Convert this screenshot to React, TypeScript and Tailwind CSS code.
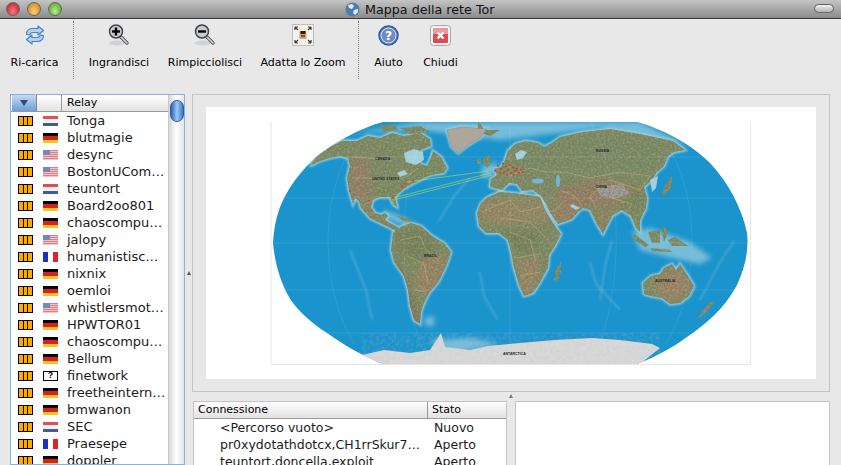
const relays: [string, string][] = [
  ["Tonga", "nl"],
  ["blutmagie", "de"],
  ["desync", "us"],
  ["BostonUCom…", "us"],
  ["teuntort", "nl"],
  ["Board2oo801", "de"],
  ["chaoscompu…", "de"],
  ["jalopy", "us"],
  ["humanistisc…", "fr"],
  ["nixnix", "de"],
  ["oemloi", "de"],
  ["whistlersmot…", "us"],
  ["HPWTOR01", "de"],
  ["chaoscompu…", "de"],
  ["Bellum", "de"],
  ["finetwork", "??"],
  ["freetheintern…", "de"],
  ["bmwanon", "de"],
  ["SEC", "nl"],
  ["Praesepe", "fr"],
  ["doppler", "de"],
];

const circuits: [string, string][] = [
  ["<Percorso vuoto>", "Nuovo"],
  ["pr0xydotathdotcx,CH1rrSkur7…", "Aperto"],
  ["teuntort,doncella,exploit", "Aperto"],
];

const Flag = ({ code }: { code: string }) => {
  if (code === "de")
    return (
      <div className="flex flex-col w-[15px] h-[10px]">
        <div className="h-[3px] bg-black" />
        <div className="h-[4px] bg-[#d8201c]" />
        <div className="h-[3px] bg-[#f6c21c]" />
      </div>
    );
  if (code === "nl")
    return (
      <div className="flex flex-col w-[15px] h-[10px]">
        <div className="h-[3px] bg-[#d9525a]" />
        <div className="h-[4px] bg-[#f4f0f0]" />
        <div className="h-[3px] bg-[#3f5a9e]" />
      </div>
    );
  if (code === "fr")
    return (
      <div className="flex w-[15px] h-[10px]">
        <div className="w-[5px] bg-[#1c2fc8]" />
        <div className="w-[5px] bg-white" />
        <div className="w-[5px] bg-[#e0222a]" />
      </div>
    );
  if (code === "us")
    return (
      <div className="relative w-[15px] h-[10px] bg-[repeating-linear-gradient(180deg,#d9808a_0,#d9808a_1px,#eec4c6_1px,#eec4c6_2px)]">
        <div className="absolute left-0 top-0 w-[7px] h-[5px] bg-[#7488bc]" />
      </div>
    );
  return (
    <div className="w-[15px] h-[10px] border border-black bg-white flex items-center justify-center text-[9px] leading-none font-bold text-black font-['Liberation_Sans',sans-serif]">
      ?
    </div>
  );
};

const Bandwidth = () => (
  <div className="flex gap-px w-[15px] h-[10px] bg-black p-px">
    <div className="flex-1 bg-[#ffa800]" />
    <div className="flex-1 bg-[#ffa800]" />
    <div className="flex-1 bg-[#ffa800]" />
  </div>
);

const Tool = ({ label, width, children }: { label: string; width: string; children: React.ReactNode }) => (
  <div className={`flex flex-col items-center shrink-0 ${width}`}>
    <div className="h-[28px] flex items-center justify-center">{children}</div>
    <span className="mt-[7px] text-[11px] leading-[14px] text-black whitespace-nowrap">{label}</span>
  </div>
);

const Reload = () => (
  <svg width="20" height="20" viewBox="0 0 20 20" fill="none">
    <path d="M1.500 9.500C1.500 5 4 3.500 8 3.500h5V.8l5.500 4.700L13 10V7.500H8C6 7.500 5 8.500 4.800 10z" fill="#b4d2ee" stroke="#3f82c4" strokeWidth="1.100" strokeLinejoin="round" />
    <path d="M18.500 10.500c0 4.500-2.500 6-6.500 6H7v2.700L1.500 14.500 7 10v2.500h5c2 0 3-1 3.200-2.500z" fill="#b4d2ee" stroke="#3f82c4" strokeWidth="1.100" strokeLinejoin="round" />
  </svg>
);

const Magnifier = ({ plus }: { plus?: boolean }) => (
  <svg width="22" height="24" viewBox="0 0 22 24" fill="none">
    <ellipse cx="9" cy="20" rx="8" ry="2.500" fill="#d2d2d2" />
    <path d="M13 14l6 6" stroke="#555" strokeWidth="3.400" strokeLinecap="round" />
    <path d="M13 14l6 6" stroke="#d8d8d8" strokeWidth="1.600" strokeLinecap="round" />
    <circle cx="8" cy="8.500" r="6.500" fill="#c5ccd4" stroke="#444" strokeWidth="1.500" />
    <path d="M4 8.500h8" stroke="#000" strokeWidth="2.400" />
    {plus && <path d="M8 4.500v8" stroke="#000" strokeWidth="2.400" />}
  </svg>
);

const FitZoom = () => (
  <svg width="22" height="22" viewBox="0 0 22 22" fill="none">
    <rect x="0.500" y="0.500" width="21" height="21" fill="#f6f3ec" stroke="#bdbdbd" />
    <rect x="7.500" y="7" width="7" height="8" fill="#c9a583" />
    <rect x="8.500" y="7" width="5" height="3" fill="#2b1c14" />
    <rect x="9" y="11" width="4" height="2" fill="#a83c2c" />
    <path d="M3 3l3 3M3 3h3M3 3v3M19 3l-3 3M19 3h-3M19 3v3M3 19l3-3M3 19h3M3 19v-3M19 19l-3-3M19 19h-3M19 19v-3" stroke="#3c3c3c" strokeWidth="1.200" />
  </svg>
);

const Help = () => (
  <svg width="21" height="21" viewBox="0 0 22 22">
    <circle cx="11" cy="11" r="10" fill="#5a83c4" stroke="#2b5aa4" strokeWidth="1.500" />
    <circle cx="11" cy="11" r="7.800" fill="#6f8cc0" stroke="#dfe8f6" strokeWidth="1" />
    <text x="11" y="15.500" textAnchor="middle" fontSize="13" fontWeight="700" fill="#fff" fontFamily="DejaVu Sans, sans-serif">?</text>
  </svg>
);

const CloseIcon = () => (
  <svg width="21" height="21" viewBox="0 0 21 21">
    <rect x="0.500" y="0.500" width="20" height="20" rx="3" fill="#f2f2f2" stroke="#a9a9a9" />
    <rect x="3" y="3" width="15" height="15" rx="1" fill="#dc4a52" />
    <rect x="3" y="3" width="15" height="6" fill="#eb9a9c" />
    <path d="M7.500 7.500l6 6M13.500 7.500l-6 6" stroke="#fff" strokeWidth="2.400" />
  </svg>
);

const Separator = () => <div className="w-0 h-[58px] border-l border-dotted border-[#777] shrink-0" />;

const earth =
  "M383 122H637C660 128 690 143 710 163C728 182 742 208 747 233C749 250 745 268 737 285C725 308 705 325 687 337C672 348 655 357 637 364H383C365 357 345 346 327 333C310 322 300 312 293 303C282 288 275 265 273 243C274 225 278 210 284 198C292 183 302 170 316 157C335 142 360 128 383 122Z";

const northAmerica =
  "M310 166L318 155 330 147 342 141 357 141 368 136 380 138 392 133 404 136 420 133 430 139 431 146 421 150 414 156 421 164 427 166 431 158 433 151 441 157 447 168 444 173 436 174 428 176 420 180 412 184 405 188 400 192 395 197 397 207 393 204 390 197 380 197 373 200 371 207 375 213 381 215 385 213 388 216 385 220 392 224 399 228 396 231 388 227 380 223 370 218 361 208 359 201 355 198 353 204 349 190 347 178 350 166 348 158 340 156 330 158 320 161Z";
const southAmerica =
  "M393 233L402 226 411 223 421 226 432 236 444 243 451 252 447 264 439 281 429 293 424 303 421 312 420 324 414 320 410 306 408 290 404 276 394 262 391 250Z";
const africa =
  "M477 213L481 203 488 197 500 192 513 193 528 195 540 197 545 210 553 223 561 234 555 246 549 255 548 268 539 284 533 293 524 296 519 285 514 268 511 252 508 240 499 233 486 233 479 226Z";
const eurasia =
  "M490 187L491 179 497 175 494 169 501 167 505 160 508 151 515 144 526 141 538 143 544 147 552 143 560 137 583 132 610 129 640 134 673 141 685 150 674 152 668 156 664 166 657 172 652 180 644 187 647 198 646 208 640 220 640 232 636 228 631 216 622 210 612 216 603 234 597 224 590 210 583 208 578 212 572 219 558 224 551 214 546 204 541 196 533 190 522 191 517 184 509 183 502 190Z";
const australia = "M643 283L651 276 660 274 664 268 672 264 676 270 680 264 688 276 694 286 689 296 680 303 670 304 662 298 650 296 644 294Z";
const greenland = "M447 130L462 127 487 129 480 138 470 144 458 153 451 146Z";
const antarctica =
  "M362 355L384 350 410 353 430 350 441 333 445 347 470 350 488 346 520 343 555 340 592 338 620 340 652 344 660 348 640 364 380 366Z";
const islands = [
  "M556 270L561 262 561 272 557 281 554 280Z",
  "M483 160L489 154 491 163 487 168Z",
  "M477 160L481 158 481 164 477 164Z",
  "M662 193L667 182 672 176 671 187 664 196Z",
  "M634 234L649 245 645 247 632 238Z",
  "M648 232L660 230 660 243 652 243Z",
  "M664 226L668 232 664 242 662 232Z",
  "M650 248L670 250 672 252 652 251Z",
  "M668 240L675 237 688 246 672 246Z",
  "M714 303L706 313 696 320 702 312 710 302Z",
  "M396 216L408 218 414 222 404 221Z",
  "M478 120L484 130 500 130 490 136 478 132Z",
  "M400 128L420 126 430 132 410 134Z",
  "M380 126L394 124 398 130 384 132Z",
];

const WorldMap = () => (
  <svg viewBox="206 107 610 272" className="w-full h-full block">
    <defs>
      <clipPath id="earth">
        <path d={earth} />
      </clipPath>
      <clipPath id="land">
        <path d={northAmerica} />
        <path d={southAmerica} />
        <path d={africa} />
        <path d={eurasia} />
        <path d={australia} />
        {islands.map((d) => (
          <path key={d} d={d} />
        ))}
      </clipPath>
      <filter id="soft">
        <feGaussianBlur stdDeviation="0.350" />
      </filter>
      <filter id="shelf">
        <feGaussianBlur stdDeviation="1.100" />
      </filter>
      <filter id="broad" x="-20%" y="-20%" width="140%" height="140%">
        <feGaussianBlur stdDeviation="2.800" />
      </filter>
      <filter id="wide" x="-20%" y="-20%" width="140%" height="140%">
        <feGaussianBlur stdDeviation="3" />
      </filter>
      <filter id="relief" x="0" y="0" width="100%" height="100%">
        <feTurbulence type="fractalNoise" baseFrequency="0.550" numOctaves="2" seed="4" />
        <feColorMatrix values="0 0 0 0 0.220 0 0 0 0 0.170 0 0 0 0 0.110 0 0 0 1.500 -0.520" />
      </filter>
      <filter id="reliefLight" x="0" y="0" width="100%" height="100%">
        <feTurbulence type="fractalNoise" baseFrequency="0.480" numOctaves="2" seed="11" />
        <feColorMatrix values="0 0 0 0 0.820 0 0 0 0 0.770 0 0 0 0 0.640 0 0 0 1.300 -0.500" />
      </filter>
      <filter id="snow" x="0" y="0" width="100%" height="100%">
        <feTurbulence type="fractalNoise" baseFrequency="0.300" numOctaves="2" seed="7" />
        <feColorMatrix values="0 0 0 0 0.500 0 0 0 0 0.500 0 0 0 0 0.500 0 0 0 1.500 -0.550" />
      </filter>
    </defs>
    <path d="M271 122V364.500H750.500V122" fill="none" stroke="#e6e6e6" />
    <g clipPath="url(#earth)">
      <rect x="270" y="120" width="482" height="246" fill="#1b93cc" />
      {/* ocean ridges and broad shelves */}
      <g filter="url(#shelf)" fill="none" stroke="#7fc3e0" strokeOpacity="0.600" strokeWidth="1.300">
        <path d="M470 178L455 195 438 222" />
        <path d="M480 272L484 296 498 320" />
        <path d="M350 250L366 290 372 320" />
        <path d="M590 262L596 284 620 310" />
        <path d="M612 240L606 262 600 300" />
        <path d="M700 300L720 262 735 240" />
      </g>
      <g filter="url(#broad)" fill="#86c4dc" fillOpacity="0.850">
        <path d="M632 232L650 228 690 242 712 258 700 264 664 256 640 250Z" />
        <path d="M350 134L420 122 640 122 690 146 600 128 500 140 420 130Z" />
        <path d="M430 340L470 338 500 344 445 356Z" />
        <path d="M384 210L400 216 412 222 404 225 386 218Z" />
        <path d="M482 166L498 162 492 176 482 178Z" />
        <path d="M424 318L434 316 434 326 426 326Z" />
      </g>
      <g filter="url(#shelf)" fill="#a2d0de" stroke="#a2d0de" strokeWidth="2.800">
        <path d={northAmerica} />
        <path d={southAmerica} />
        <path d={africa} />
        <path d={eurasia} />
        <path d={australia} />
        <path d={greenland} />
      </g>
      <g filter="url(#soft)">
        <path d={antarctica} fill="#d8d8d8" />
        <g clipPath="url(#land)">
          <rect x="270" y="120" width="482" height="246" fill="#758a5e" />
          <g filter="url(#wide)">
            <path d="M352 160L368 158 372 196 360 206 350 190Z" fill="#8f7e62" />
            <path d="M360 205L385 225 370 222Z" fill="#8f7e62" />
            <path d="M404 170L430 160 440 172 404 186Z" fill="#6e8a5a" />
            <path d="M386 180L404 186 394 198 376 196Z" fill="#6f8a58" />
            <path d="M394 228L430 232 440 250 415 262 398 250Z" fill="#6d8052" />
            <path d="M424 258L448 256 436 286 424 298 414 282Z" fill="#94825e" />
            <path d="M396 250L410 290 420 324 412 320 400 280Z" fill="#7d6a50" />
            <path d="M480 198L545 200 552 222 500 226 480 220Z" fill="#90865f" />
            <path d="M500 230L540 232 532 256 516 250Z" fill="#6d7e50" />
            <path d="M516 258L540 262 534 292 524 294Z" fill="#958560" />
            <path d="M505 160L530 145 600 140 668 146 650 170 590 168 540 172Z" fill="#6f8a60" />
            <path d="M555 190L600 178 640 186 634 208 596 206 560 214Z" fill="#8e7a5c" />
            <path d="M551 206L582 206 572 220 558 224Z" fill="#94805e" />
            <path d="M596 210L612 214 602 234Z" fill="#8e7f58" />
            <path d="M622 192L646 190 644 206 624 214Z" fill="#6e8458" />
            <path d="M650 278L678 268 692 286 676 302 660 296Z" fill="#98825e" />
          </g>
          <path d="M596 188L622 184 630 194 614 199 600 196Z" fill="#9c9a98" filter="url(#soft)" />
          <rect x="270" y="120" width="482" height="246" filter="url(#relief)" />
          <rect x="270" y="120" width="482" height="246" filter="url(#reliefLight)" opacity="0.400" />
        </g>
        <path d={greenland} fill="#aea69a" stroke="#8d8376" strokeWidth="0.500" />
        <path d={antarctica} filter="url(#snow)" opacity="0.300" />
        {/* inland water */}
        <path d="M404 153L414 149 423 152 424 160 416 165 406 162Z" fill="#a2d0de" />
        <path d="M397 173L404 170 408 174 400 177Z" fill="#a2d0de" />
        <path d="M515 154L521 150 527 152 523 158 517 160Z" fill="#a2d0de" />
        <ellipse cx="538" cy="181" rx="6" ry="2.500" fill="#6fb8d8" />
        <ellipse cx="558" cy="181" rx="2" ry="6" fill="#6fb8d8" />
        <path d="M572 204L580 208 576 210 570 206Z" fill="#a2d0de" />
        <path d="M650 180L658 176 656 188 652 192Z" fill="#a2d0de" />
      </g>
      {/* national borders */}
      <g fill="none" stroke="#cdb878" strokeOpacity="0.800" strokeWidth="0.600" clipPath="url(#land)">
        <path d="M352 157L392 160M352 178L405 178 418 168M361 206L380 197" />
        <path d="M400 240L420 236 426 250 440 262M408 256L424 264 428 284M414 290L426 292" />
        <path d="M482 212L510 200 520 212 545 206M500 218L530 222 548 240M510 232L530 240 536 262M515 258L540 254M520 276L540 272" />
        <path d="M510 176L530 168 545 172 565 172 590 178 620 172 650 176 640 190 610 180 590 196 596 208M560 190L575 196 582 206M566 200L552 212M612 198L632 204 624 214" />
      </g>
      <g fill="none" stroke="#ffffff" strokeOpacity="0.160" strokeWidth="0.600">
        <path d="M273 243H750M284 198H740M284 290H740M316 157H712M327 333H690" />
        <path d="M510 122V364M430 122C395 180 395 300 430 364M590 122C625 180 625 300 590 364M350 150C320 200 320 290 355 345M670 150C700 200 700 290 665 345" />
      </g>
      <g fontFamily="Liberation Sans, sans-serif" fontSize="3.500" fill="#1c2a2a" fontWeight="700">
        <text x="375" y="160">CANADA</text>
        <text x="372" y="180">UNITED STATES</text>
        <text x="596" y="152">RUSSIA</text>
        <text x="424" y="257">BRAZIL</text>
        <text x="655" y="282">AUSTRALIA</text>
        <text x="503" y="355">ANTARCTICA</text>
        <text x="596" y="188">CHINA</text>
      </g>
      {/* Tor circuit lines */}
      <g fill="none" stroke="#a8d86a" strokeOpacity="0.900" strokeWidth="0.700">
        <path d="M407 182L488 171" />
        <path d="M393 198L491 173" />
        <path d="M394 200L492 175" />
        <path d="M393 198V204" />
      </g>
      <g fill="#e8322a">
        {[
          [494, 170], [497, 165], [500, 168], [503, 172], [505, 166], [507, 169], [509, 164], [510, 172], [512, 167],
          [514, 170], [516, 168], [518, 172], [520, 169], [506, 174], [499, 172], [502, 163], [513, 174], [522, 171],
          [349, 190], [392, 197], [401, 186], [412, 180], [368, 200], [404, 183],
        ].map(([x, y]) => (
          <rect key={`${x}-${y}`} x={x} y={y} width="2" height="1.500" />
        ))}
      </g>
    </g>
  </svg>
);

export default function App() {
  return (
    <div className="w-[841px] h-[465px] overflow-hidden bg-[#e8e8e8] font-['DejaVu_Sans',sans-serif] text-black">
      <div className="relative h-[19px] flex items-center bg-linear-to-b from-[#c4c4c4] to-[#8c8c8c] border-b border-[#3c3c3c]">
        <div className="flex items-center gap-[7px] pl-[6px]">
          <div className="w-[14px] h-[14px] rounded-full border border-[#666] bg-radial-[at_50%_70%] from-[#ff7a80] to-[#b81420]" />
          <div className="w-[14px] h-[14px] rounded-full border border-[#666] bg-radial-[at_50%_70%] from-[#ffd070] to-[#c87414]" />
          <div className="w-[14px] h-[14px] rounded-full border border-[#666] bg-radial-[at_50%_70%] from-[#b8ec8c] to-[#4c9420]" />
        </div>
        <div className="flex items-center gap-[5px] ml-[283px]">
          <svg width="15" height="15" viewBox="0 0 15 15">
            <circle cx="7.500" cy="7.500" r="7" fill="#4d7eb0" />
            <path d="M3 3l4-1 2 2-2 3-3-1zM9 8l4-1 0 3-3 3-2-2z" fill="#e4eaf0" />
          </svg>
          <span className="text-[12.700px] leading-[15px] text-[#111] whitespace-nowrap">Mappa della rete Tor</span>
        </div>
        <div className="absolute right-[7px] top-[4px] w-[20px] h-[9px] rounded-full border border-[#666] bg-linear-to-b from-[#f4f4f4] to-[#b0b0b0]" />
      </div>

      <div className="h-[75px] flex pt-[2px]">
        <Tool label="Ri-carica" width="w-[69px]"><Reload /></Tool>
        <div className="w-[4px]" />
        <Separator />
        <div className="w-[5px]" />
        <Tool label="Ingrandisci" width="w-[80px]"><Magnifier plus /></Tool>
        <Tool label="Rimpicciolisci" width="w-[92px]"><Magnifier /></Tool>
        <Tool label="Adatta lo Zoom" width="w-[104px]"><FitZoom /></Tool>
        <div className="w-[3px]" />
        <Separator />
        <div className="w-[4px]" />
        <Tool label="Aiuto" width="w-[51px]"><Help /></Tool>
        <Tool label="Chiudi" width="w-[53px]"><CloseIcon /></Tool>
      </div>

      <div className="flex pl-[10px]">
        <div className="w-[175px] h-[371px] flex flex-col overflow-hidden border border-[#8fb0d8] bg-white">
          <div className="flex shrink-0">
            <div className="flex-1 min-w-0">
              <div className="flex h-[17px] border-b border-[#9a9a9a] text-[11px] leading-[15px]">
                <div className="w-[25px] ml-px flex items-center justify-center bg-linear-to-b from-[#c4d8f2] to-[#6f9fd8] border-r border-[#8a8a8a]">
                  <div className="w-0 h-0 border-x-[4px] border-x-transparent border-t-[6px] border-t-[#2c4a7c]" />
                </div>
                <div className="w-[25px] bg-linear-to-b from-white to-[#e2e2e2] border-r border-[#9a9a9a]" />
                <div className="flex-1 pl-[5px] bg-linear-to-b from-white to-[#e2e2e2]">Relay</div>
              </div>
              <div className="flex flex-col">
                {relays.map(([name, code], i) => (
                  <div key={i} className="flex items-center h-[17px]">
                    <div className="w-[7px]" />
                    <Bandwidth />
                    <div className="w-[10px]" />
                    <Flag code={code} />
                    <span className="ml-[9px] text-[13px] leading-[17px] text-[#1a1a1a] whitespace-nowrap">{name}</span>
                  </div>
                ))}
              </div>
            </div>
            <div className="w-[16px] h-[371px] shrink-0 flex justify-center pt-[5px] bg-linear-to-r from-[#d8d8d8] via-white to-[#e4e4e4] border-l border-[#c8c8c8]">
              <div className="w-[14px] h-[22px] rounded-full border border-[#2f5fa0] bg-linear-to-r from-[#2464b8] via-[#a0c8f0] to-[#3478cc]" />
            </div>
          </div>
        </div>

        <div className="w-[7px] flex items-center justify-center">
          <div className="w-0 h-0 mt-[-20px] border-x-[2.500px] border-x-transparent border-b-[4px] border-b-[#555]" />
        </div>

        <div className="w-[638px] flex flex-col">
          <div className="h-[298px] border border-[#c4c4c4] pt-[12px] pl-[13px]">
            <div className="w-[610px] h-[272px] bg-white">
              <WorldMap />
            </div>
          </div>
          <div className="h-[9px] flex justify-center">
            <div className="w-0 h-0 mt-[2px] ml-[-1px] border-x-[2.500px] border-x-transparent border-b-[4px] border-b-[#777]" />
          </div>
          <div className="flex gap-[8px]">
            <div className="w-[314px] h-[70px] border border-[#c4c4c4] bg-white ml-px">
              <div className="flex h-[17px] border-b border-[#9a9a9a] text-[11px] leading-[16px] bg-linear-to-b from-white to-[#e2e2e2]">
                <div className="w-[234px] pl-[4px] border-r border-[#9a9a9a]">Connessione</div>
                <div className="flex-1 pl-[4px]">Stato</div>
              </div>
              {circuits.map(([path, state]) => (
                <div key={path} className="flex h-[17px] text-[12.500px] leading-[17px] text-[#1a1a1a]">
                  <div className="w-[237px] pl-[26px] whitespace-nowrap">{path}</div>
                  <div className="pl-[3px]">{state}</div>
                </div>
              ))}
            </div>
            <div className="w-[315px] h-[70px] border border-[#c4c4c4] bg-white" />
          </div>
        </div>
      </div>
    </div>
  );
}
